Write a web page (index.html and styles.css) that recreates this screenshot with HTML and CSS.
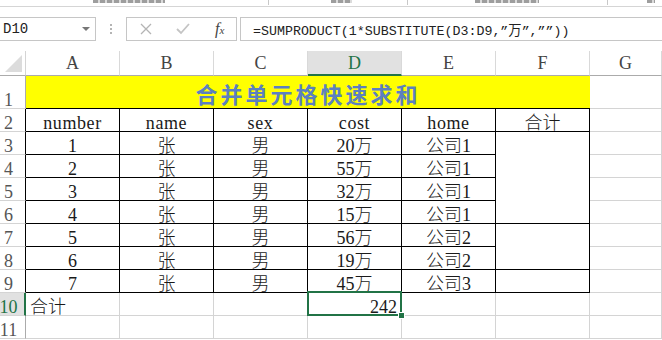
FILE: index.html
```html
<!DOCTYPE html>
<html lang="zh-CN">
<head>
<meta charset="UTF-8">
<title>合并单元格快速求和</title>
<link rel="stylesheet" href="styles.css">
</head>
<body>

<div class="ribbon">
    <span class="frag f1"></span>
    <span class="vl v1"></span>
    <span class="frag f2"></span>
    <span class="vl v2"></span>
    <span class="frag f3"></span>
    <span class="vl v3"></span>
    <span class="frag f4"></span>
</div>

<div class="fbar">
    <div class="namebox">
        <span>D10</span>
        <svg width="8" height="5" viewBox="0 0 8 5"><path d="M0 0h8L4 4z" fill="#777"/></svg>
    </div>
    <div class="dots"><span></span><span></span><span></span></div>
    <div class="btns">
        <svg width="12" height="12" viewBox="0 0 12 12"><path d="M1 1l10 10M11 1L1 11" stroke="#b4b4b4" stroke-width="1.3" fill="none"/></svg>
        <svg width="14" height="12" viewBox="0 0 14 12"><path d="M1 6l4 4 8-9" stroke="#c4c4c4" stroke-width="1.8" fill="none"/></svg>
        <span class="fx">f<small>x</small></span>
    </div>
    <div class="formula">=SUMPRODUCT(1*SUBSTITUTE(D3:D9,”万”,””))</div>
</div>

<div class="sheet">
    <!-- column headers -->
    <div class="corner"></div>
    <div class="ch">A</div>
    <div class="ch">B</div>
    <div class="ch">C</div>
    <div class="ch sel">D</div>
    <div class="ch">E</div>
    <div class="ch">F</div>
    <div class="ch">G</div>

    <!-- row 1 -->
    <div class="rh tall">1</div>
    <div class="title">合并单元格快速求和</div>
    <div class="c tall"></div>

    <!-- row 2 -->
    <div class="rh bk">2</div>
    <div class="c t lat">number</div>
    <div class="c t lat">name</div>
    <div class="c t lat">sex</div>
    <div class="c t lat">cost</div>
    <div class="c t lat">home</div>
    <div class="c t">合计</div>
    <div class="c"></div>

    <div class="rh bk">3</div>
    <div class="c t">1</div>
    <div class="c t">张</div>
    <div class="c t">男</div>
    <div class="c t">20万</div>
    <div class="c t">公司1</div>
    <div class="c t span4"></div>
    <div class="c"></div>

    <div class="rh bk">4</div>
    <div class="c t">2</div>
    <div class="c t">张</div>
    <div class="c t">男</div>
    <div class="c t">55万</div>
    <div class="c t">公司1</div>
    <div class="c"></div>

    <div class="rh bk">5</div>
    <div class="c t">3</div>
    <div class="c t">张</div>
    <div class="c t">男</div>
    <div class="c t">32万</div>
    <div class="c t">公司1</div>
    <div class="c"></div>

    <div class="rh bk">6</div>
    <div class="c t">4</div>
    <div class="c t">张</div>
    <div class="c t">男</div>
    <div class="c t">15万</div>
    <div class="c t">公司1</div>
    <div class="c"></div>

    <div class="rh bk">7</div>
    <div class="c t">5</div>
    <div class="c t">张</div>
    <div class="c t">男</div>
    <div class="c t">56万</div>
    <div class="c t">公司2</div>
    <div class="c t span2"></div>
    <div class="c"></div>

    <div class="rh bk">8</div>
    <div class="c t">6</div>
    <div class="c t">张</div>
    <div class="c t">男</div>
    <div class="c t">19万</div>
    <div class="c t">公司2</div>
    <div class="c"></div>

    <div class="rh bk">9</div>
    <div class="c t">7</div>
    <div class="c t">张</div>
    <div class="c t">男</div>
    <div class="c t">45万</div>
    <div class="c t">公司3</div>
    <div class="c t"></div>
    <div class="c"></div>

    <!-- row 10 -->
    <div class="rh sel">10</div>
    <div class="c left">合计</div>
    <div class="c"></div>
    <div class="c"></div>
    <div class="c right active">242</div>
    <div class="c"></div>
    <div class="c"></div>
    <div class="c"></div>

    <div class="rh">11</div>
    <div class="c"></div>
    <div class="c"></div>
    <div class="c"></div>
    <div class="c"></div>
    <div class="c"></div>
    <div class="c"></div>
    <div class="c"></div>
</div>

</body>
</html>
```

FILE: styles.css
```css
body {
    margin: 0;
    width: 662px;
    height: 340px;
    overflow: hidden;
    background: #fff;
    font-family: "Liberation Serif", "Noto Sans CJK SC", serif;
}

/* ribbon remnant at the top */
.ribbon {
    height: 6px;
    border-bottom: 1px solid #d5d5d5;
    display: flex;
    align-items: flex-start;
}
.frag {
    height: 3px;
    background: repeating-linear-gradient(90deg, #7d7d7d 0 5px, #cfcfcf 5px 7px);
    opacity: .75;
}
.vl {
    width: 1px;
    height: 5px;
    background: #c8c8c8;
}
.f1 { margin-left: 93px; width: 72px; }
.v1 { margin-left: 103px; }
.f2 { margin-left: 62px; width: 21px; }
.v2 { margin-left: 55px; }
.f3 { margin-left: 67px; width: 64px; }
.v3 { margin-left: 68px; }
.f4 { margin-left: 39px; width: 8px; }

/* formula bar */
.fbar {
    margin-top: 10px;
    height: 24px;
    display: flex;
}
.namebox {
    width: 97px;
    margin-left: -1px;
    border: 1px solid #c6c6c6;
    box-sizing: border-box;
    display: flex;
    align-items: center;
    justify-content: space-between;
    padding: 0 5px 0 3px;
    font-family: "Liberation Mono", monospace;
    font-size: 14px;
    color: #222;
}
.dots {
    width: 30px;
    display: flex;
    flex-direction: column;
    align-items: center;
    justify-content: center;
    gap: 2px;
}
.dots span {
    width: 2px;
    height: 2px;
    background: #b4b4b4;
}
.btns {
    width: 111px;
    border: 1px solid #c6c6c6;
    box-sizing: border-box;
    display: flex;
    align-items: center;
    padding: 0 0 0 13px;
    gap: 24px;
}
.fx {
    font-family: "Liberation Serif", serif;
    font-style: italic;
    font-size: 16px;
    color: #444;
    margin-left: 1px;
}
.fx small {
    font-size: 11px;
}
.formula {
    flex: 1;
    margin-left: 3px;
    margin-right: -1px;
    border: 1px solid #c6c6c6;
    box-sizing: border-box;
    padding-left: 12px;
    display: flex;
    align-items: center;
    font-family: "Liberation Mono", "Noto Sans CJK SC", monospace;
    font-size: 13.3px;
    color: #222;
    white-space: nowrap;
}

/* sheet grid */
.sheet {
    margin-top: 10px;
    display: grid;
    grid-template-columns: 26px repeat(6, 94px) 1fr;
    grid-template-rows: 25px 33px repeat(10, 23px);
}
.sheet > div {
    box-sizing: border-box;
}
.corner {
    border-right: 1px solid #d4d4d4;
    border-bottom: 1px solid #ababab;
    position: relative;
}
.corner::after {
    content: "";
    position: absolute;
    left: 5px;
    top: 4px;
    width: 17px;
    height: 17px;
    background: #dcdcdc;
    clip-path: polygon(100% 0, 100% 100%, 0 100%);
}
.ch {
    border-right: 1px solid #d9d9d9;
    border-bottom: 1px solid #ababab;
    display: flex;
    align-items: center;
    justify-content: center;
    font-size: 18px;
    color: #444;
    padding-top: 1px;
}
.ch.sel {
    background: #e1e1e1;
    color: #217346;
    border-bottom: 2px solid #217346;
}
.rh {
    border-right: 1px solid #ababab;
    border-bottom: 1px solid #d4d4d4;
    display: flex;
    align-items: flex-end;
    justify-content: center;
    padding-right: 8px;
    font-size: 18px;
    line-height: 16px;
    color: #555;
}
.rh.bk {
    border-right-color: #000;
}
.rh.sel {
    background: #e1e1e1;
    color: #217346;
    border-right: 2px solid #217346;
    padding-right: 7px;
}
.c {
    border-right: 1px solid #d4d4d4;
    border-bottom: 1px solid #d4d4d4;
    display: flex;
    align-items: flex-end;
    justify-content: center;
    font-size: 18px;
    font-weight: 300;
    line-height: 16px;
    color: #1a1a1a;
    white-space: nowrap;
}
.c.lat {
    letter-spacing: 0.6px;
}
.title {
    grid-column: span 6;
    background: #ffff00;
    border-bottom: 1px solid #000;
    display: flex;
    align-items: center;
    justify-content: center;
    padding-top: 2px;
    font-family: "Noto Sans CJK SC", sans-serif;
    font-weight: 700;
    font-size: 22px;
    letter-spacing: 3px;
    color: #5c80bf;
}
.c.t {
    border-right-color: #000;
    border-bottom-color: #000;
}
.span4 {
    grid-row: span 4;
}
.span2 {
    grid-row: span 2;
}
.c.left {
    justify-content: flex-start;
    padding-left: 4px;
}
.c.right {
    justify-content: flex-end;
    padding-right: 4px;
}
.active {
    position: relative;
}
.active::before {
    content: "";
    position: absolute;
    left: -1px;
    top: -2px;
    right: -1px;
    bottom: -1px;
    border: 2px solid #217346;
}
.active::after {
    content: "";
    position: absolute;
    right: -4px;
    bottom: -4px;
    width: 5px;
    height: 5px;
    background: #217346;
    border: 1px solid #fff;
}
```
